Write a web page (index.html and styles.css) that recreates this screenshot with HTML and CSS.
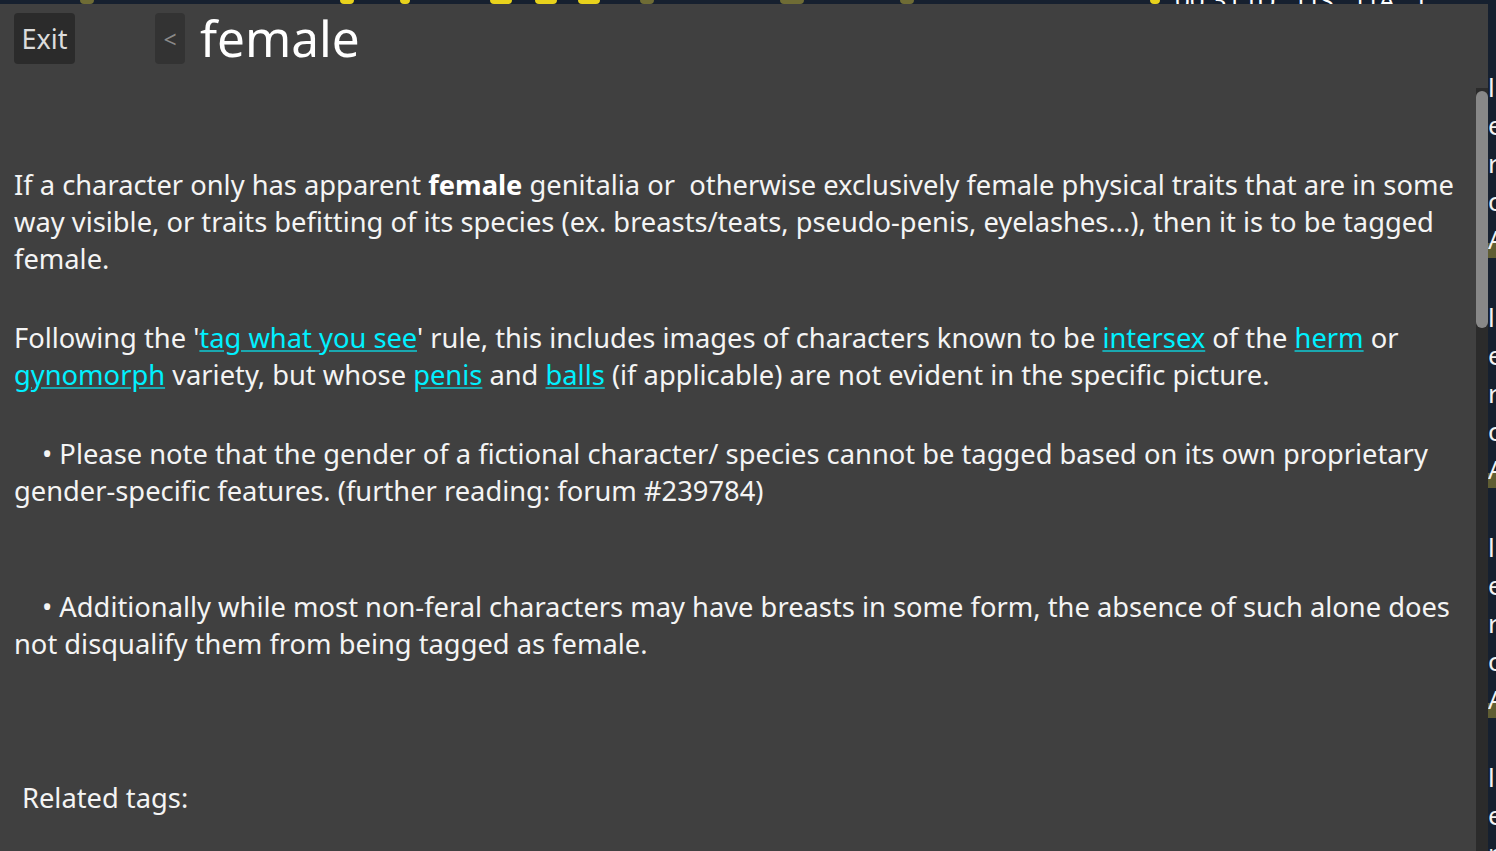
FILE: index.html
```html
<!DOCTYPE html>
<html lang="en">
<head>
    <meta charset="UTF-8">
    <meta name="viewport" content="width=device-width, initial-scale=1.0">
    <title>female - wiki</title>
    <link rel="stylesheet" href="styles.css">
</head>
<body>
    <!-- page behind the wiki overlay -->
    <div class="backdrop">
        <div class="backdrop-top">
            <span class="blob olive" style="left: 80px; width: 14px;"></span>
            <span class="blob yellow" style="left: 340px; width: 14px;"></span>
            <span class="blob yellow" style="left: 400px; width: 10px;"></span>
            <span class="blob yellow" style="left: 490px; width: 22px;"></span>
            <span class="blob yellow" style="left: 535px; width: 22px;"></span>
            <span class="blob yellow" style="left: 578px; width: 22px;"></span>
            <span class="blob olive" style="left: 640px; width: 14px;"></span>
            <span class="blob olive" style="left: 780px; width: 24px;"></span>
            <span class="blob olive" style="left: 900px; width: 14px;"></span>
            <span class="blob yellow" style="left: 1150px; width: 10px;"></span>
            <span class="backdrop-time">00:31 [D...] [S...] [A...]</span>
        </div>
        <div class="backdrop-side">
            <div class="side-block">
                <span>l</span><span>e</span><span>r</span><span>c</span><span>A</span>
            </div>
            <div class="side-block">
                <span>l</span><span>e</span><span>r</span><span>c</span><span>A</span>
            </div>
            <div class="side-block">
                <span>l</span><span>e</span><span>r</span><span>c</span><span>A</span>
            </div>
            <div class="side-block">
                <span>l</span><span>e</span><span>r</span>
            </div>
        </div>
    </div>

    <!-- Wiki Overlay -->
    <div class="wiki-overlay">
        <div class="wiki-header">
            <button class="btn-exit">Exit</button>
            <button class="btn-back">&lt;</button>
            <h1 class="wiki-title">female</h1>
        </div>

        <div class="wiki-main">
            <div class="wiki-body">
                <p>If a character only has apparent <b>female</b> genitalia or &nbsp;otherwise exclusively female physical traits that are in some way visible, or traits befitting of its species (ex. breasts/teats, pseudo-penis, eyelashes...), then it is to be tagged female.</p>

                <p>Following the '<a href="#">tag what you see</a>' rule, this includes images of characters known to be <a href="#">intersex</a> of the <a href="#">herm</a> or <a href="#">gynomorph</a> variety, but whose <a href="#">penis</a> and <a href="#">balls</a> (if applicable) are not evident in the specific picture.</p>

                <p class="note">&bull; Please note that the gender of a fictional character/ species cannot be tagged based on its own proprietary gender-specific features. (further reading: forum #239784)</p>

                <p class="note spaced">&bull; Additionally while most non-feral characters may have breasts in some form, the absence of such alone does not disqualify them from being tagged as female.</p>

                <h3 class="related-title">Related tags:</h3>
                <ul class="related-list">
                    <li><a href="#">male</a></li>
                    <li><a href="#">intersex</a></li>
                    <li><a href="#">girly</a></li>
                    <li><a href="#">ambiguous gender</a></li>
                    <li><a href="#">female/female</a></li>
                    <li><a href="#">male/female</a></li>
                    <li><a href="#">solo female</a></li>
                    <li><a href="#">breasts</a></li>
                    <li><a href="#">pussy</a></li>
                    <li><a href="#">herm</a></li>
                    <li><a href="#">gynomorph</a></li>
                    <li><a href="#">andromorph</a></li>
                </ul>
            </div>

            <!-- scrollbar drawn by hand, the browser hides its own -->
            <div class="scroll-track">
                <div class="scroll-thumb"></div>
            </div>
        </div>
    </div>
</body>
</html>
```

FILE: styles.css
```css
* {
    box-sizing: border-box;
}

html, body {
    margin: 0;
    height: 100%;
    overflow: hidden;
}

body {
    font-family: 'Noto Sans', 'Open Sans', sans-serif;
    background-color: #16202f;
    color: #f4f4f4;
}

/* page behind the overlay */
.backdrop {
    height: 100%;
}

.backdrop-top {
    position: relative;
    height: 4px;
}

.blob {
    position: absolute;
    top: 0;
    height: 4px;
    border-radius: 0 0 6px 6px;
}

.blob.yellow {
    background-color: #e8d21c;
}

.blob.olive {
    background-color: #6f6c35;
}

.backdrop-time {
    position: absolute;
    left: 1175px;
    top: -18px;
    font-size: 26px;
    color: #fff;
    white-space: nowrap;
}

.backdrop-side {
    position: absolute;
    left: 1488px;
    top: 68px;
    width: 40px;
    font-size: 26px;
    line-height: 38px;
    color: #f2f2f2;
}

.side-block {
    margin-bottom: 40px;
    background: linear-gradient(to bottom, transparent 175px, #5f5d33 175px, #5f5d33 192px, transparent 192px);
}

.side-block span {
    display: block;
}

/* Wiki overlay */
.wiki-overlay {
    position: absolute;
    top: 4px;
    left: 0;
    width: 1488px;
    bottom: 0;
    background-color: #404040;
    display: flex;
    flex-direction: column;
}

.wiki-header {
    height: 84px;
    flex-shrink: 0;
    display: flex;
    align-items: flex-start;
    padding: 9px 0 0 14px;
}

.wiki-header button {
    font-family: inherit;
    border: none;
    border-radius: 4px;
    height: 51px;
    padding: 0;
    cursor: pointer;
}

.btn-exit {
    width: 61px;
    background-color: #2b2b2b;
    color: #dcdcdc;
    font-size: 27px;
}

.btn-back {
    width: 30px;
    margin-left: 80px;
    background-color: #333;
    color: #8a8a8a;
    font-size: 23px;
}

.wiki-title {
    margin: 0 0 0 15px;
    font-size: 49.5px;
    font-weight: 400;
    line-height: 51px;
    color: #fff;
}

.wiki-main {
    flex: 1;
    min-height: 0;
    display: flex;
}

.wiki-body {
    flex: 1;
    overflow: hidden;
    padding: 78px 2px 0 14px;
    font-size: 27.3px;
    line-height: 37px;
}

.scroll-track {
    width: 12px;
    flex-shrink: 0;
    background-color: #2b2b2b;
    padding-top: 3px;
}

.scroll-thumb {
    height: 237px;
    background-color: #888;
    border-radius: 6px;
}

.wiki-body p {
    margin: 0 0 42px;
}

.wiki-body b {
    font-weight: 700;
    color: #fff;
}

.wiki-body a {
    color: #00f0ff;
    text-decoration-color: #1aa8b0;
}

.note {
    text-indent: 28px;
}

.note.spaced {
    margin-top: 79px !important;
}

.related-title {
    margin: 117px 0 0 8px;
    font-size: 27.3px;
    font-weight: 400;
    line-height: 37px;
}

.related-list {
    margin: 60px 0 0;
    padding-left: 40px;
}
```
